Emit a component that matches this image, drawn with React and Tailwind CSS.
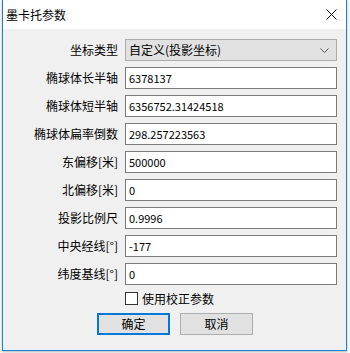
import { useState } from "react";

const rows = [
  { label: "椭球体长半轴", value: "6378137" },
  { label: "椭球体短半轴", value: "6356752.31424518" },
  { label: "椭球体扁率倒数", value: "298.257223563" },
  { label: "东偏移[米]", value: "500000" },
  { label: "北偏移[米]", value: "0" },
  { label: "投影比例尺", value: "0.9996" },
  { label: "中央经线[°]", value: "-177" },
  { label: "纬度基线[°]", value: "0" },
];

const font = { fontFamily: '"Noto Sans CJK SC", "Noto Sans", sans-serif' };

export default function App() {
  const [checked, setChecked] = useState(false);

  return (
    <div className="w-[350px] h-[353px] bg-[#f7f7f7] overflow-hidden" style={font}>
      <div className="ml-[2px] w-[345px] h-[351px] border-x border-b border-[#1883d7] bg-[#f0f0f0] flex flex-col shadow-[0_1px_2px_rgba(0,0,0,0.25)]">
        {/* title bar */}
        <div className="h-[29px] bg-white flex items-center justify-between pl-[3px] pr-[8px]">
          <span className="text-[12px] text-black leading-none">墨卡托参数</span>
          <svg width="11" height="11" viewBox="0 0 11 11" className="mr-[1px]">
            <path d="M0.5 0.5 L10.5 10.5 M10.5 0.5 L0.5 10.5" stroke="#111" strokeWidth="1" />
          </svg>
        </div>

        <div className="flex flex-col pt-[10px] pr-[9px]">
          {/* coordinate type */}
          <div className="flex items-center h-[22px]">
            <div className="w-[115px] text-right text-[12px] text-black leading-none">坐标类型</div>
            <div className="ml-[7px] w-[212px] h-[22px] border border-[#acacac] bg-[#e1e1e1] flex items-center justify-between pl-[3px] pr-[7px]">
              <span className="text-[12px] text-black leading-none">自定义(投影坐标)</span>
              <svg width="9" height="5" viewBox="0 0 9 5">
                <path d="M0.5 0.5 L4.5 4.5 L8.5 0.5" fill="none" stroke="#555" strokeWidth="1" />
              </svg>
            </div>
          </div>

          {rows.map((r) => (
            <div key={r.label} className="flex items-center h-[22px] mt-[6px]">
              <div className="w-[115px] text-right text-[12px] text-black leading-none whitespace-nowrap">{r.label}</div>
              <div className="ml-[7px] w-[212px] h-[22px] border border-[#7a7a7a] bg-white flex items-center pl-[3px]">
                <span className="text-[11px] text-black leading-none">{r.value}</span>
              </div>
            </div>
          ))}

          {/* checkbox */}
          <div className="flex items-center mt-[7px] ml-[122px] h-[13px]">
            <button
              onClick={() => setChecked(!checked)}
              className="w-[13px] h-[13px] border border-[#333] bg-white flex items-center justify-center"
            >
              {checked && <span className="text-[10px] leading-none">✓</span>}
            </button>
            <span className="ml-[4px] text-[12px] text-black leading-none">使用校正参数</span>
          </div>

          {/* buttons */}
          <div className="flex mt-[8px] ml-[94px] gap-[10px]">
            <button className="w-[73px] h-[22px] border-2 border-[#0078d7] bg-[#e1e1e1] text-[12px] text-black leading-none">确定</button>
            <button className="w-[73px] h-[22px] border border-[#adadad] bg-[#e1e1e1] text-[12px] text-black leading-none">取消</button>
          </div>
        </div>
      </div>
    </div>
  );
}
